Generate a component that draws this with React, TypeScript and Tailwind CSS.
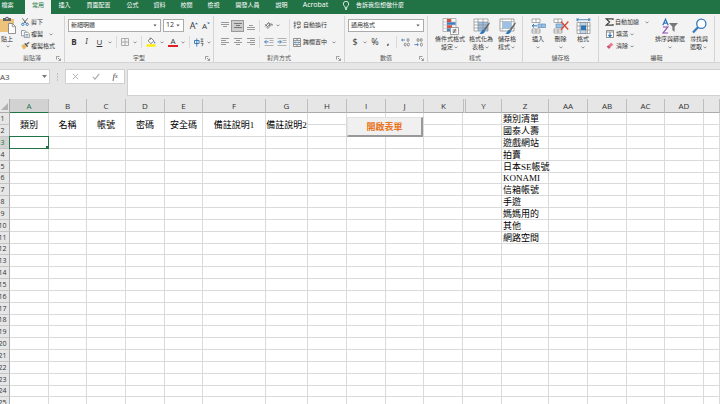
import React from 'react'
import clsx from 'clsx'

interface ChildrenProps {
  children?: React.ReactNode
  className?: string
}

interface Tab {
  label: string
  width: string
  active?: boolean
}

interface Column {
  name: string
  width: string
  title?: string
}

const TABS: Tab[] = [
  { label: '檔案', width: 'w-[25px] pr-2.5' },
  { label: '常用', width: 'w-[26px]', active: true },
  { label: '插入', width: 'w-[27px]' },
  { label: '頁面配置', width: 'w-[41px]' },
  { label: '公式', width: 'w-[27px]' },
  { label: '資料', width: 'w-[27px]' },
  { label: '校閱', width: 'w-[27px]' },
  { label: '檢視', width: 'w-[27px]' },
  { label: '開發人員', width: 'w-[41px]' },
  { label: '說明', width: 'w-[27px]' },
  { label: 'Acrobat', width: 'w-[41px] text-[7px]' },
]

const COLUMNS: Column[] = [
  { name: 'A', width: 'w-[39px]', title: '類別' },
  { name: 'B', width: 'w-[38px]', title: '名稱' },
  { name: 'C', width: 'w-[39px]', title: '帳號' },
  { name: 'D', width: 'w-[39px]', title: '密碼' },
  { name: 'E', width: 'w-[38px]', title: '安全碼' },
  { name: 'F', width: 'w-[63px]', title: '備註說明1' },
  { name: 'G', width: 'w-[42px]', title: '備註說明2' },
  { name: 'H', width: 'w-[39px]' },
  { name: 'I', width: 'w-[39px]' },
  { name: 'J', width: 'w-[38px]' },
  { name: 'K', width: 'w-[39px]' },
  { name: 'Y', width: 'w-[39px]' },
  { name: 'Z', width: 'w-[47px]' },
  { name: 'AA', width: 'w-[39px]' },
  { name: 'AB', width: 'w-[39px]' },
  { name: 'AC', width: 'w-[38px]' },
  { name: 'AD', width: 'w-[39px]' },
  { name: '', width: 'w-auto' },
]

const CATEGORIES = [
  '類別清單',
  '國泰人壽',
  '遊戲網站',
  '拍賣',
  '日本SE帳號',
  'KONAMI',
  '信箱帳號',
  '手遊',
  '媽媽用的',
  '其他',
  '網路空間',
]

const ROWS = Array.from({ length: 25 }, (_, i) => i + 1)

/* ---------- small parts ---------- */

const Caret = ({ className = 'w-2' }: { className?: string }) => (
  <span className={clsx('flex shrink-0 justify-center', className)}>
    <svg width="4" height="3" viewBox="0 0 4 3" fill="none" stroke="#777" strokeWidth="0.8">
      <path d="M0.5 0.6 2 2.1 3.5 0.6" />
    </svg>
  </span>
)

const Divider = ({ className = 'h-3' }: { className?: string }) => (
  <span className={clsx('w-px shrink-0 bg-[#dadada]', className)} />
)

const IconButton = ({ label, className, children }: ChildrenProps & { label: string }) => (
  <button
    type="button"
    aria-label={label}
    className={clsx('flex h-3 shrink-0 items-center justify-center', className)}
  >
    {children}
  </button>
)

// icon on the left, caption on the right
const RowButton = ({
  icon,
  label,
  caret,
}: {
  icon: React.ReactNode
  label: string
  caret?: string
}) => (
  <button type="button" className="flex h-3 items-center whitespace-nowrap">
    <span className="mr-px flex w-2.5 justify-center">{icon}</span>
    <span>{label}</span>
    {caret && <Caret className={caret} />}
  </button>
)

// icon above one or two caption lines
const BigButton = ({
  icon,
  lines,
  className,
}: {
  icon: React.ReactNode
  lines: string[]
  className: string
}) => (
  <button
    type="button"
    className={clsx('flex shrink-0 flex-col items-center whitespace-nowrap', className)}
  >
    <span className="flex h-[18px] items-center">{icon}</span>
    <span className="leading-2">{lines[0]}</span>
    <span className="flex h-2 items-center leading-2">
      {lines[1]}
      <Caret className="w-1.5" />
    </span>
  </button>
)

const Group = ({
  title,
  className,
  launcher = true,
  children,
}: ChildrenProps & { title: string; launcher?: boolean }) => (
  <section className={clsx('mt-0.5 flex shrink-0 flex-col border-r border-[#d4d4d4]', className)}>
    <div className="flex h-[38px]">{children}</div>
    <div className="flex h-2 items-center text-[#555]">
      <span className="w-2" />
      <span className="flex-1 text-center">{title}</span>
      <span className="w-2">
        {launcher && (
          <svg width="5" height="5" viewBox="0 0 5 5" fill="none" stroke="#777" strokeWidth="0.7">
            <path d="M0.5 3.5v-3h3M2 2l2.3 2.3M4.5 2.5v2h-2" />
          </svg>
        )}
      </span>
    </div>
  </section>
)

const Dropdown = ({
  label,
  value,
  className,
}: {
  label: string
  value: string
  className: string
}) => (
  <div className={clsx('relative h-[13px] shrink-0', className)}>
    <select
      aria-label={label}
      className="block size-full appearance-none border border-[#ababab] bg-white pl-0.5 text-[#333]"
    >
      <option>{value}</option>
    </select>
    <svg className="pointer-events-none absolute top-[5px] right-1" width="4" height="3" viewBox="0 0 4 3">
      <path d="M0.4 0.5h3.2L2 2.4z" fill="#555" />
    </svg>
  </div>
)

const AlignIcon = ({ d, stroke = '#999' }: { d: string; stroke?: string }) => (
  <svg width="8" height="8" viewBox="0 0 8 8" stroke={stroke} fill="none" shapeRendering="crispEdges">
    <path d={d} />
  </svg>
)

const IndentIcon = ({ flip }: { flip?: boolean }) => (
  <svg width="10" height="8" viewBox="0 0 10 8" fill="none" strokeWidth="0.9">
    <path d="M0.5 0.5h9M5.5 2.5h4M5.5 4.5h4M0.5 7.5h9" stroke="#aaa" />
    <path d={flip ? 'M0.5 3.9h3.8M2.8 2.2l1.7 1.7-1.7 1.7' : 'M4.5 3.9H0.8M2.3 2.2 0.6 3.9l1.7 1.7'} stroke="#2e75b6" />
  </svg>
)

/* ---------- ribbon groups ---------- */

const ClipboardGroup = () => (
  <Group title="剪貼簿" className="w-[65px]">
    <button type="button" className="flex w-[18px] shrink-0 flex-col items-start whitespace-nowrap">
      <svg width="16" height="18" viewBox="0 0 16 18">
        <path d="M0 3h14v13H0z" fill="#ecc37b" />
        <path d="M3 2h2.2a2 2 0 0 1 3.6 0H11v3H3z" fill="#666" />
        <circle cx="7" cy="2.6" r="0.8" fill="#f3f3f3" />
        <path d="M8.5 7.5h4l3 3v7h-7z" fill="#fff" stroke="#777" strokeWidth="0.8" />
        <path d="M12.3 7.7v3h3" fill="none" stroke="#777" strokeWidth="0.7" />
      </svg>
      <span className="mt-px ml-px leading-2">貼上</span>
      <Caret className="mt-0.5 ml-1 w-2" />
    </button>
    <div className="ml-0.5 flex flex-col">
      <RowButton
        label="剪下"
        icon={
          <svg width="8" height="8" viewBox="0 0 8 8" fill="none" strokeWidth="0.9">
            <path d="M1.3 0.3 5.2 5.3M6.7 0.3 2.8 5.3" stroke="#555" />
            <circle cx="1.8" cy="6.3" r="1.2" stroke="#2e75b6" />
            <circle cx="6.2" cy="6.3" r="1.2" stroke="#2e75b6" />
          </svg>
        }
      />
      <RowButton
        label="複製"
        caret="w-4"
        icon={
          <svg width="9" height="8" viewBox="0 0 9 8" fill="#fff" stroke="#777" strokeWidth="0.7">
            <path d="M0.5 0.5h3.3l1.5 1.3v4H0.5z" />
            <path d="M3.3 2.3h3.4l1.6 1.4v3.9h-5z" />
            <path d="M4.4 4.6h2.8M4.4 6h2.8" stroke="#2e75b6" />
          </svg>
        }
      />
      <RowButton
        label="複製格式"
        icon={
          <svg width="9" height="8" viewBox="0 0 9 8">
            <path d="M0.4 3.4 3 2l2.5 3L3 7.6 1.8 6.4z" fill="#ecb65c" />
            <path d="m3.2 1.8 1.2-.8 2.7 3-.9 1.2z" fill="#555" />
            <path d="m5.6 2.3 2.6-2" stroke="#555" strokeWidth="1.2" />
          </svg>
        }
      />
    </div>
  </Group>
)

const FontGroup = () => (
  <Group title="字型" className="w-[149px]">
    <div className="flex flex-col gap-1 pt-[3px] pl-[3px]">
      <div className="flex items-center">
        <Dropdown label="字型名稱" value="新細明體" className="w-[93px]" />
        <Dropdown label="字型大小" value="12" className="ml-0.5 w-[21px] text-[7px]" />
        <IconButton label="放大字型" className="ml-1 w-3 text-[9px]">
          A
          <svg width="3" height="8" viewBox="0 0 3 8">
            <path d="M0 2.3 1.5 0.4 3 2.3z" fill="#2e75b6" />
          </svg>
        </IconButton>
        <IconButton label="縮小字型" className="w-3 text-[8px]">
          A
          <svg width="3" height="8" viewBox="0 0 3 8">
            <path d="M0 0.4h3L1.5 2.3z" fill="#2e75b6" />
          </svg>
        </IconButton>
      </div>
      <div className="flex items-center text-[8px]">
        <IconButton label="粗體" className="w-3 font-bold">B</IconButton>
        <IconButton label="斜體" className="w-[13px] font-serif italic">I</IconButton>
        <IconButton label="底線" className="w-[13px] underline">U</IconButton>
        <Caret />
        <Divider className="mx-0.5 h-3" />
        <IconButton label="框線" className="w-3">
          <svg width="8" height="8" viewBox="0 0 8 8" fill="none" stroke="#999" strokeWidth="0.8">
            <path d="M0.5 0.5h7v7h-7zM4 0.5v7M0.5 4h7" />
          </svg>
        </IconButton>
        <Caret />
        <Divider className="mx-0.5 h-3" />
        <IconButton label="填滿色彩" className="w-3.5">
          <svg width="10" height="10" viewBox="0 0 10 10">
            <path d="M2 3.8 5 1l3 2.9-3 2.7z" fill="#fff" stroke="#666" strokeWidth="0.8" />
            <path d="M4.2 3V0.5" stroke="#666" strokeWidth="0.7" />
            <path d="M8.6 4.2c.9 1.2 1 2.3.1 2.3s-.7-1-.1-2.3z" fill="#2e75b6" />
            <path d="M0.5 7.3h9v2.4h-9z" fill="#ffee00" />
          </svg>
        </IconButton>
        <Caret />
        <IconButton label="字型色彩" className="w-3.5">
          <span className="border-b-2 border-[#e02020] px-0.5 leading-2">A</span>
        </IconButton>
        <Caret className="w-1.5" />
        <Divider className="mx-[3px] h-3" />
        <IconButton label="注音標示" className="w-3">
          <svg width="10" height="9" viewBox="0 0 10 9" fill="none" strokeWidth="0.9">
            <path d="M0.5 2.5h4.6v3H0.5zM2.8 0.5v8" stroke="#2e75b6" />
            <path d="M6.6 1h2.6M8 1v2.2M6.6 3.6h2.8M6.8 5.4h2.4L8 8.2" stroke="#666" />
          </svg>
        </IconButton>
        <Caret />
      </div>
    </div>
  </Group>
)

const AlignmentGroup = () => (
  <Group title="對齊方式" className="w-[131px]">
    <div className="flex flex-col gap-1 pt-[3px] pl-1">
      <div className="flex h-[13px] items-center">
        <IconButton label="靠上對齊" className="w-[13px]"><AlignIcon d="M0 0.5h8M0 2.5h8M2 4.5h4" /></IconButton>
        <IconButton label="置中對齊" className="w-[13px] border border-[#999] bg-[#cdcdcd]">
          <AlignIcon d="M0 1.5h8M2 3.5h4M0 5.5h8" stroke="#777" />
        </IconButton>
        <IconButton label="靠下對齊" className="w-[13px]"><AlignIcon d="M2 3.5h4M0 5.5h8M0 7.5h8" /></IconButton>
        <Divider className="mx-0.5 h-3" />
        <IconButton label="方向" className="w-3">
          <svg width="9" height="9" viewBox="0 0 9 9" fill="none" strokeWidth="0.8">
            <path d="M1 5.6 4.8 1.4M2.6 7 6.3 2.8M1.3 3.3l2 2.2M3.6 2.7a1.3 1.3 0 1 1 1.6 1.9" stroke="#555" />
            <path d="M3.4 8 8 3.2M6.4 3h1.8v1.8" stroke="#777" />
          </svg>
        </IconButton>
        <Caret />
      </div>
      <div className="flex items-center">
        <IconButton label="靠左" className="w-[13px]"><AlignIcon d="M0 0.5h8M0 2.5h5M0 4.5h8M0 6.5h5" /></IconButton>
        <IconButton label="置中" className="w-[13px]"><AlignIcon d="M0 0.5h8M2 2.5h4M0 4.5h8M2 6.5h4" /></IconButton>
        <IconButton label="靠右" className="w-[13px]"><AlignIcon d="M0 0.5h8M3 2.5h5M0 4.5h8M3 6.5h5" /></IconButton>
        <Divider className="mx-0.5 h-3" />
        <IconButton label="減少縮排" className="w-[13px]"><IndentIcon /></IconButton>
        <IconButton label="增加縮排" className="w-[13px]"><IndentIcon flip /></IconButton>
      </div>
    </div>
    <Divider className="mt-[3px] ml-px h-8" />
    <div className="flex flex-col gap-[5px] pt-[3px] pl-0.5">
      <RowButton
        label="自動換行"
        icon={
          <svg width="8" height="8" viewBox="0 0 8 8" fill="none" strokeWidth="0.8">
            <path d="M1.8 0.3v7.4M0.4 2.2h2.8M0.5 5.2l2.6-1" stroke="#666" />
            <path d="M4.2 1h3v2.4h-3zM7.2 4.6v2H4.4M5.6 5.3 4.3 6.6l1.3 1.2" stroke="#555" />
          </svg>
        }
      />
      <RowButton
        label="跨欄置中"
        caret="w-3.5"
        icon={
          <svg width="8" height="9" viewBox="0 0 8 9" fill="none" strokeWidth="0.8">
            <path d="M0.4 0.5h7.2v8H0.4zM0.4 2.6h7.2M0.4 6.4h7.2M4 0.5v2M4 6.4v2" stroke="#777" />
            <path d="M1.3 4.5h5.4M2.4 3.6l-1 .9 1 .9M5.6 3.6l1 .9-1 .9" stroke="#2e75b6" strokeWidth="0.6" />
          </svg>
        }
      />
    </div>
  </Group>
)

const NumberGroup = () => (
  <Group title="數值" className="w-[83px]">
    <div className="flex flex-col gap-1 pt-[3px] pl-[3px]">
      <Dropdown label="數值格式" value="通用格式" className="w-[76px]" />
      <div className="flex items-center text-[9px]">
        <IconButton label="會計數字格式" className="w-3.5">$</IconButton>
        <Caret className="w-1.5" />
        <IconButton label="百分比樣式" className="w-3.5">%</IconButton>
        <IconButton label="千分位樣式" className="w-3 font-bold">,</IconButton>
        <Divider className="mx-0.5 h-3" />
        <IconButton label="增加小數位數" className="w-[13px]">
          <svg width="9" height="9" viewBox="0 0 9 9" fill="none" strokeWidth="0.8">
            <path d="M4 2H0.6M1.9 0.8.6 2l1.3 1.2" stroke="#2e75b6" />
            <ellipse cx="7" cy="2" rx="1" ry="1.5" stroke="#777" />
            <ellipse cx="4.2" cy="6.6" rx="1" ry="1.5" stroke="#777" />
            <ellipse cx="7.4" cy="6.6" rx="1" ry="1.5" stroke="#777" />
          </svg>
        </IconButton>
        <IconButton label="減少小數位數" className="w-[13px]">
          <svg width="9" height="9" viewBox="0 0 9 9" fill="none" strokeWidth="0.8">
            <ellipse cx="4" cy="2" rx="1" ry="1.5" stroke="#777" />
            <ellipse cx="7.2" cy="2" rx="1" ry="1.5" stroke="#777" />
            <ellipse cx="7.4" cy="6.6" rx="1" ry="1.5" stroke="#777" />
            <path d="M0.4 6.6h3.8M3 5.4l1.3 1.2L3 7.8" stroke="#2e75b6" />
          </svg>
        </IconButton>
      </div>
    </div>
  </Group>
)

const StylesGroup = () => (
  <Group title="樣式" className="w-[95px]" launcher={false}>
    <div className="flex pt-px pl-1.5">
      <BigButton
        className="w-8"
        lines={['條件式格式', '設定']}
        icon={
          <svg width="17" height="17" viewBox="0 0 17 17">
            <path d="M1 0.5h13v13H1z" fill="#fff" stroke="#999" strokeWidth="0.7" />
            <path d="M1 4h13M1 7h13M1 10.3h13M5 0.5v13M9.6 0.5v13" stroke="#aaa" strokeWidth="0.6" />
            <path d="M5 1h4v3H5zM5 7.3h5v2.8H5z" fill="#d6503c" />
            <path d="M5 4.2h8.5v2.6H5zM5 10.6h3v2.7H5z" fill="#3f7fc1" />
            <path d="M8.5 9.5h8v7h-8z" fill="#fff" stroke="#777" strokeWidth="0.7" />
            <path d="M10.5 12h4M10.5 14h4M13.8 10.8l-2.6 4.4" stroke="#555" strokeWidth="0.8" />
          </svg>
        }
      />
      <BigButton
        className="w-[30px]"
        lines={['格式化為', '表格']}
        icon={
          <svg width="17" height="17" viewBox="0 0 17 17">
            <path d="M1 1h14v12H1z" fill="#fff" />
            <path d="M5 4h10v9H5z" fill="#9bc2e6" />
            <path d="M1 1h14v12H1zM1 4h14M1 7h14M1 10h14M5 1v12M10 1v12" fill="none" stroke="#8a8a8a" strokeWidth="0.7" />
            <path d="m16.2 4.2-5.5 7 1.5 1.2 4.6-7z" fill="#666" />
            <path d="M10.4 11.4c-2 .5-1.6 3-4.4 4.2 3 1.2 6.2 0 6-3z" fill="#2e75b6" />
          </svg>
        }
      />
      <BigButton
        className="w-[22px]"
        lines={['儲存格', '樣式']}
        icon={
          <svg width="17" height="17" viewBox="0 0 17 17">
            <path d="M1 1h14v12H1z" fill="#fff" stroke="#8a8a8a" strokeWidth="0.8" />
            <path d="M3.5 3.5h9v7h-9z" fill="#9bc2e6" />
            <path d="M3.5 1v12M12.5 1v12M1 3.5h14M1 10.5h14" stroke="#aaa" strokeWidth="0.6" />
            <path d="m16.2 4.2-5.5 7 1.5 1.2 4.6-7z" fill="#666" />
            <path d="M10.4 11.4c-2 .5-1.6 3-4.4 4.2 3 1.2 6.2 0 6-3z" fill="#2e75b6" />
          </svg>
        }
      />
    </div>
  </Group>
)

const CellsGroup = () => (
  <Group title="儲存格" className="w-[76px]" launcher={false}>
    <div className="flex pt-px pl-1">
      <BigButton
        className="w-[22px]"
        lines={['插入']}
        icon={
          <svg width="15" height="16" viewBox="0 0 15 16" fill="#fff" strokeWidth="0.7">
            <path d="M1 1h8v3.5H1zM5 1v3.5M1 11h8v4H1zM5 11v4M1 13h8" stroke="#888" />
            <path d="M7 6h7.5v3.5H7z" fill="#9bc2e6" stroke="#5b8fc0" />
            <path d="M10.8 6v3.5" stroke="#5b8fc0" />
            <path d="M6 7.8H1.2M3 6 1.2 7.8 3 9.6" fill="none" stroke="#2e75b6" strokeWidth="1" />
          </svg>
        }
      />
      <BigButton
        className="w-[23px]"
        lines={['刪除']}
        icon={
          <svg width="16" height="16" viewBox="0 0 16 16" fill="#fff" strokeWidth="0.7">
            <path d="M1 1h8v3.5H1zM5 1v3.5M1 11h8v4H1zM5 11v4M1 13h8" stroke="#888" />
            <path d="M3 6h7v3.5H3z" fill="#9bc2e6" stroke="#5b8fc0" />
            <path d="m8 3.5 7.2 8M15.4 3.5 8 11.7" stroke="#d6482f" strokeWidth="1.3" />
          </svg>
        }
      />
      <BigButton
        className="w-[22px]"
        lines={['格式']}
        icon={
          <svg width="15" height="16" viewBox="0 0 15 16" fill="#fff" strokeWidth="0.7">
            <path d="M1 1.7h12M2.5.4 1 1.7 2.5 3M12 .4l1.5 1.3L12 3M1 .2v3M13.8.2v3" fill="none" stroke="#2e75b6" strokeWidth="0.8" />
            <path d="M1 4.5h13v11H1z" stroke="#888" />
            <path d="M4 4.5h6v11H4z" fill="#bdd7ee" stroke="#888" />
            <path d="M1 8h13M1 12h13M11.5 4.5v11" stroke="#888" />
            <path d="M5 7.5h5v4.5H5z" fill="#2e75b6" />
          </svg>
        }
      />
    </div>
  </Group>
)

const EditingGroup = () => (
  <Group title="編輯" className="w-[116px]" launcher={false}>
    <div className="ml-1.5 flex w-[49px] flex-col">
      <RowButton
        label="自動加總"
        caret="w-4"
        icon={
          <svg width="9" height="8" viewBox="0 0 9 8" fill="none" stroke="#444" strokeWidth="1.2">
            <path d="M8 2V0.8H1.2L4.6 4 1.2 7.2H8V6" />
          </svg>
        }
      />
      <RowButton
        label="填滿"
        caret="w-2"
        icon={
          <svg width="8" height="8" viewBox="0 0 8 8" fill="#fff" strokeWidth="0.8">
            <path d="M0.5 0.5h7v7h-7zM0.5 2h7" stroke="#777" />
            <path d="M4 2.6v4M2.4 5 4 6.6 5.6 5" fill="none" stroke="#2e75b6" strokeWidth="1.1" />
          </svg>
        }
      />
      <RowButton
        label="清除"
        caret="w-2"
        icon={
          <svg width="8" height="8" viewBox="0 0 8 8">
            <path d="m0.8 4.8 4.3-4 2.2 1.8-4.2 4.2z" fill="#e8788c" />
            <path d="m0.8 4.8 1.3-1.2 2.3 1.9-1.3 1.3z" fill="#c8506a" />
          </svg>
        }
      />
    </div>
    <div className="flex pt-px">
      <BigButton
        className="w-8"
        lines={['排序與篩選']}
        icon={
          <svg width="16" height="16" viewBox="0 0 16 16" fill="none" strokeWidth="1.2">
            <path d="m0.8 7.2 2.7-6 2.7 6M1.8 5.2h3.5" stroke="#2e75b6" />
            <path d="M1 9h4.8L1 15h5" stroke="#8b4fb0" />
            <path d="M7 5h9l-3.4 3.8v5l-2.2-1.5V8.8z" fill="#777" />
          </svg>
        }
      />
      <BigButton
        className="w-[26px]"
        lines={['尋找與', '選取']}
        icon={
          <svg width="15" height="16" viewBox="0 0 15 16" fill="none" stroke="#3a78bd">
            <circle cx="9.3" cy="5.8" r="4.6" strokeWidth="1.3" fill="#fff" />
            <path d="m6 9.2-5 5.3" strokeWidth="2.2" />
          </svg>
        }
      />
    </div>
  </Group>
)

/* ---------- page bands ---------- */

const TabBar = () => (
  <nav className="flex h-3.5 shrink-0 items-start bg-[#217346] text-white">
    {TABS.map((tab) => (
      <button
        key={tab.label}
        type="button"
        className={clsx(
          'flex h-3.5 shrink-0 justify-center pt-px leading-2 whitespace-nowrap',
          tab.width,
          tab.active && 'bg-[#f3f3f3] text-[#217346]'
        )}
      >
        {tab.label}
      </button>
    ))}
    <button type="button" className="ml-1.5 flex pt-px leading-2 whitespace-nowrap">
      <svg className="mr-1.5" width="8" height="9" viewBox="0 0 8 9" fill="none" stroke="#fff" strokeWidth="0.8">
        <path d="M2.8 6.3C2.8 5 1.3 4.6 1.3 3a2.7 2.7 0 0 1 5.4 0c0 1.6-1.5 2-1.5 3.3zM2.9 7.4h2.2M3.2 8.5h1.6" />
      </svg>
      告訴我您想做什麼
    </button>
  </nav>
)

const FormulaBar = () => (
  <div className="flex h-[30px] shrink-0 items-start bg-[#e6e6e6] text-[#444]">
    <div className="relative h-[15px] w-[50px]">
      <input
        aria-label="名稱方塊"
        defaultValue="A3"
        className="block size-full border border-l-0 border-[#d0d0d0] bg-white text-[8px]"
      />
      <svg className="absolute top-1.5 right-[3px]" width="5" height="3" viewBox="0 0 5 3">
        <path d="M0 0h5L2.5 3z" fill="#777" />
      </svg>
    </div>
    <svg className="mx-1.5 mt-1" width="3" height="8" viewBox="0 0 3 8" fill="#999">
      <path d="M1 0.5h1v1H1zM1 3.5h1v1H1zM1 6.5h1v1H1z" />
    </svg>
    <div className="flex h-[15px] w-[60px] items-center justify-around border border-[#d0d0d0] bg-white">
      <IconButton label="取消">
        <svg width="7" height="7" viewBox="0 0 7 7" stroke="#aaa" strokeWidth="0.9">
          <path d="m0.8 0.8 5.4 5.4M6.2 0.8.8 6.2" />
        </svg>
      </IconButton>
      <IconButton label="輸入">
        <svg width="8" height="7" viewBox="0 0 8 7" fill="none" stroke="#aaa" strokeWidth="1.1">
          <path d="m0.8 3.8 2.2 2.4L7.2 0.8" />
        </svg>
      </IconButton>
      <IconButton label="插入函數" className="font-['Liberation_Serif',serif] text-[9px] italic">
        f<span className="text-[6px]">x</span>
      </IconButton>
    </div>
    <input
      aria-label="資料編輯列"
      className="ml-0.5 block h-[27px] min-w-0 flex-1 border border-r-0 border-[#d0d0d0] bg-white"
    />
  </div>
)

const Sheet = () => (
  <main className="min-h-0 flex-1 overflow-hidden bg-white">
    {/* the row header is partly off the left edge */}
    <table className="-ml-1 w-[calc(100%+4px)] table-fixed border-separate border-spacing-0 text-[9px] leading-[10px] text-black">
      <thead className="text-[8px] text-[#333]">
        <tr className="h-3.5">
          <th className="w-[14px] border-r border-b border-[#ababab] bg-[#e6e6e6] p-0">
            <svg className="ml-1" width="8" height="8" viewBox="0 0 8 8">
              <path d="M8 1v7H1z" fill="#b1b1b1" />
            </svg>
          </th>
          {COLUMNS.map((col) => (
            <th
              key={col.name}
              className={clsx(
                'border-b font-normal',
                col.width,
                col.name === 'A' ? 'border-b-[#217346] bg-[#d2d2d2] text-[#217346]' : 'border-b-[#ababab] bg-[#e6e6e6]',
                col.name === 'Y' && 'border-l-3 border-double border-l-[#bdbdbd]',
                col.name !== 'K' && 'border-r border-r-[#bdbdbd]'
              )}
            >
              {col.name}
            </th>
          ))}
        </tr>
      </thead>
      <tbody>
        {ROWS.map((row) => (
          <tr key={row} className={row % 6 === 0 ? 'h-[11px]' : 'h-3'}>
            <th
              scope="row"
              className={clsx(
                'border-r border-b border-b-[#c4c4c4] text-[7px] font-normal',
                row === 3
                  ? 'border-r-[#217346] bg-[#d2d2d2] text-[#217346]'
                  : 'border-r-[#ababab] bg-[#e6e6e6] text-[#333]'
              )}
            >
              {row}
            </th>
            {COLUMNS.map((col) => {
              if (col.title && row === 2) return null
              return (
                <td
                  key={col.name}
                  rowSpan={col.title && row === 1 ? 2 : undefined}
                  className={clsx(
                    "relative border-r border-b border-[#dadada] font-['Liberation_Serif','Noto_Sans_CJK_TC',serif] whitespace-nowrap",
                    col.title && 'text-center',
                    col.name === 'Z' && 'pl-px'
                  )}
                >
                  {row === 1 && col.title}
                  {col.name === 'Z' && CATEGORIES[row - 1]}
                  {/* form control floating over I1:J2 */}
                  {col.name === 'I' && row === 1 && (
                    <button
                      type="button"
                      className="absolute top-1 left-0 z-10 h-5 w-[76px] border border-t-[#e3e3e3] border-r-2 border-b-2 border-[#999] border-l-[#e3e3e3] bg-[#f0f0f0] font-['Noto_Sans_CJK_TC',sans-serif] font-bold text-[#e8731a]"
                    >
                      開啟表單
                    </button>
                  )}
                  {/* selection frame with its fill handle */}
                  {col.name === 'A' && row === 3 && (
                    <span className="absolute -inset-px z-10 border border-[#217346]">
                      <span className="absolute -right-px -bottom-px size-[3px] bg-[#217346]" />
                    </span>
                  )}
                </td>
              )
            })}
          </tr>
        ))}
      </tbody>
    </table>
  </main>
)

export default function App() {
  return (
    <div className="flex h-screen flex-col overflow-hidden bg-[#e6e6e6] font-['Open_Sans','Noto_Sans_CJK_TC',sans-serif] text-[6px] text-[#333]">
      <TabBar />
      <div className="flex h-[49px] shrink-0 overflow-hidden border-b border-[#d4d4d4] bg-[#f3f3f3]">
        <ClipboardGroup />
        <FontGroup />
        <AlignmentGroup />
        <NumberGroup />
        <StylesGroup />
        <CellsGroup />
        <EditingGroup />
      </div>
      <div className="h-1.5 shrink-0" />
      <FormulaBar />
      <Sheet />
    </div>
  )
}
